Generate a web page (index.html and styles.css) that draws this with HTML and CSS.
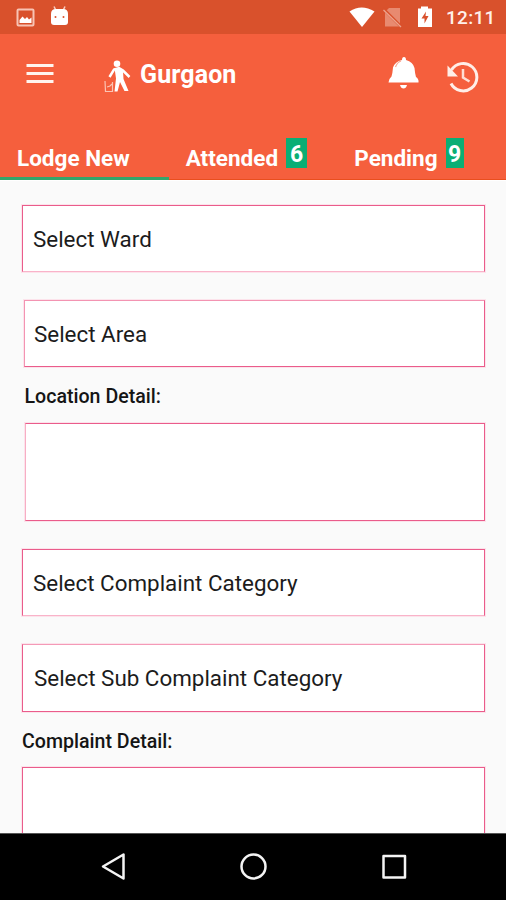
FILE: index.html
```html
<!DOCTYPE html>
<html lang="en">
<head>
<meta charset="utf-8">
<title>Gurgaon</title>
<link rel="stylesheet" href="styles.css">
</head>
<body>
<div class="screen">
  <div class="status">
    <svg class="status-left" width="80" height="34" viewBox="0 0 80 34">
      <rect x="17.5" y="9.5" width="16" height="16" rx="1" fill="none" stroke="#f8c3b4" stroke-width="2"/>
      <path d="M19.500 23v-3l3-3.500 2.500 2.500 2-2 2 2.500 2.500-2V23z" fill="#fff"/>
      <path d="M54 6.500l2 4M65 6.500l-2 4" stroke="#f9cec1" stroke-width="1.500"/>
      <path d="M51 14q0-5 5-5h7q5 0 5 5v8q0 3-3 3H54q-3 0-3-3z" fill="#fff"/>
      <circle cx="55.500" cy="17" r="1" fill="#d9512c"/><circle cx="63.500" cy="17" r="1" fill="#d9512c"/>
    </svg>
    <svg class="status-right" width="90" height="34" viewBox="348 0 90 34">
      <path d="M349.500 11.500Q361.500 3.500 374.500 11.500L362 27z" fill="#fff"/>
      <path d="M389 8h11v18.500h-15V12z" fill="#e88a70"/>
      <path d="M383 8.500l18.500 18.500" stroke="#d9512c" stroke-width="3"/>
      <path d="M383.500 10l17.500 17" stroke="#eda38e" stroke-width="1.300"/>
      <path d="M418 8.500h3V6.500h7v2h4V27h-14z" fill="#fff"/>
      <path d="M426 11.500l-4.500 7h3v5l4-7.500h-3z" fill="#d9512c"/>
    </svg>
    <span class="clock">12:11</span>
  </div>
  <header class="appbar">
    <svg class="menu" width="28" height="24" viewBox="0 0 28 24"><path d="M.500 3.500h27M.500 11.500h27M.500 19.500h27" stroke="#fff4ee" stroke-width="3"/></svg>
    <svg class="logo" width="30" height="34" viewBox="103 59 30 34">
      <circle cx="117" cy="63.800" r="3.300" fill="#fff"/>
      <path d="M109.500 77L114 69.500l5-1.500 4 2.500 6.500 6.500" fill="none" stroke="#fff" stroke-width="2.500"/>
      <path d="M114.500 68h6l2.500 3.500.500 7.500 5 12h-4l-4.500-9-2.500 9.500h-3l1.500-13z" fill="#fff"/>
      <path d="M105 81l.5 10.500h7V82M107 87l3-1 2-2" fill="none" stroke="#fbc4b4" stroke-width="1.200"/>
    </svg>
    <h1 class="title">Gurgaon</h1>
    <svg class="bell" width="32" height="34" viewBox="388 56 32 34">
      <path d="M402 60q0-3 2-3t2 3q7 2 8.500 8 .500 6 1.500 9 3 2 2.500 5.500h-30q0-3.500 3-6 1-3 1.500-9 2-6 9-7.500z" fill="#fff"/>
      <path d="M400 85h7q-1 3.500-3.500 3.500T400 85z" fill="#fff"/>
      <path d="M395.500 67q2-5 5.500-6" fill="none" stroke="#f8a993" stroke-width="1.200"/>
    </svg>
    <svg class="history" width="36" height="34" viewBox="445 59 36 34">
      <path d="M451.500 70A13.700 13.700 0 1 1 451 83.500" fill="none" stroke="#ffeee8" stroke-width="3"/>
      <path d="M447.500 65.500v11h10.500z" fill="#ffeee8"/>
      <path d="M463 69v8.500l6.500 4" fill="none" stroke="#ffded4" stroke-width="2.500"/>
    </svg>
  </header>
  <nav class="tabs">
    <div class="tab active"><span class="tab-label">Lodge New</span></div>
    <div class="tab"><span class="tab-label">Attended</span><span class="count six">6</span></div>
    <div class="tab"><span class="tab-label">Pending</span><span class="count nine">9</span></div>
  </nav>
  <main class="form">
    <div class="field ward"><span>Select Ward</span></div>
    <div class="field area"><span>Select Area</span></div>
    <div class="label location"><span>Location Detail:</span></div>
    <div class="field box"></div>
    <div class="field category"><span>Select Complaint Category</span></div>
    <div class="field sub"><span>Select Sub Complaint Category</span></div>
    <div class="label complaint"><span>Complaint Detail:</span></div>
    <div class="field last"></div>
  </main>
  <footer class="navbar">
    <svg width="506" height="66" viewBox="0 834 506 66" fill="none" stroke="#f4f4f4" stroke-width="2.500" stroke-linejoin="round">
      <path d="M123.500 854.500v24L103 866.500z"/>
      <circle cx="253.500" cy="866.500" r="12"/>
      <rect x="383.500" y="856" width="21.500" height="21.500"/>
    </svg>
  </footer>
</div>
</body>
</html>
```
FILE: styles.css
```css
* { box-sizing: border-box; }
body { margin: 0; font-family: Roboto, "Liberation Sans", sans-serif; }
svg { display: block; flex: none; }
.screen { width: 506px; height: 900px; display: flex; flex-direction: column; overflow: hidden; background: #fafafa; }
.status { height: 34px; flex: none; display: flex; align-items: center; background: #d9512c; }
.status-right { margin-left: 268px; }
.clock { margin: 2px 0 0 8px; color: #fff0ea; font-size: 19px; font-weight: 500; letter-spacing: 0.3px; line-height: 34px; }
.appbar { height: 98px; flex: none; display: flex; align-items: flex-start; background: #f55f3d; color: #fff; }
.menu { margin: 28px 0 0 26px; }
.logo { margin: 25px 0 0 49px; }
.title { margin: 25px 0 0 7px; width: 100px; font-size: 25px; font-weight: 700; letter-spacing: 0.1px; line-height: 32px; white-space: nowrap; }
.bell { margin: 22px 0 0 148px; }
.history { margin: 25px 0 0 25px; }
.tabs { height: 49px; flex: none; display: grid; grid-template-columns: repeat(3, 1fr); background: #f55f3d; border-bottom: 1px solid #fff; color: #fff; }
.tab { display: flex; align-items: flex-start; padding-left: 17px; border-bottom: 1px solid #e94e1e; }
.tab.active { border-bottom: 3px solid #35a66b; }
.tab-label { margin-top: 12px; font-size: 22.5px; font-weight: 700; line-height: 28px; white-space: nowrap; }
.count { height: 30px; margin: 6px 0 0 8px; background: #0aae74; font-size: 23px; font-weight: 700; line-height: 33px; text-align: center; }
.six { width: 21px; }
.nine { width: 18px; }
.form { flex: 1; min-height: 0; overflow: hidden; padding: 24px 21px 0 22px; }
.field { display: flex; align-items: center; height: 67px; background: #fff; border: 1px solid #ea5c8b; box-shadow: 0 0 0 1px #fce3eb; padding-left: 10px; font-size: 22.4px; color: #1c1c1c; white-space: nowrap; }
.ward, .category { border-bottom-color: #f9b3c9; }
.area { margin: 28px 0 0 2px; padding-left: 9px; border-top-color: #f394b2; border-left-color: #f394b2; }
.label { height: 56px; line-height: 60px; font-size: 19.6px; font-weight: 500; color: #151515; white-space: nowrap; }
.location { padding-left: 2.5px; }
.box { height: 98px; margin-left: 3px; border-left-color: #f7aec4; }
.category { margin-top: 28px; }
.sub { height: 68px; margin-top: 28px; padding-left: 11px; border-top-color: #f49ab7; }
.complaint { height: 55px; line-height: 59px; }
.last { height: 110px; }
.navbar { height: 67px; flex: none; background: #000; border-top: 1px solid #555; }
```
